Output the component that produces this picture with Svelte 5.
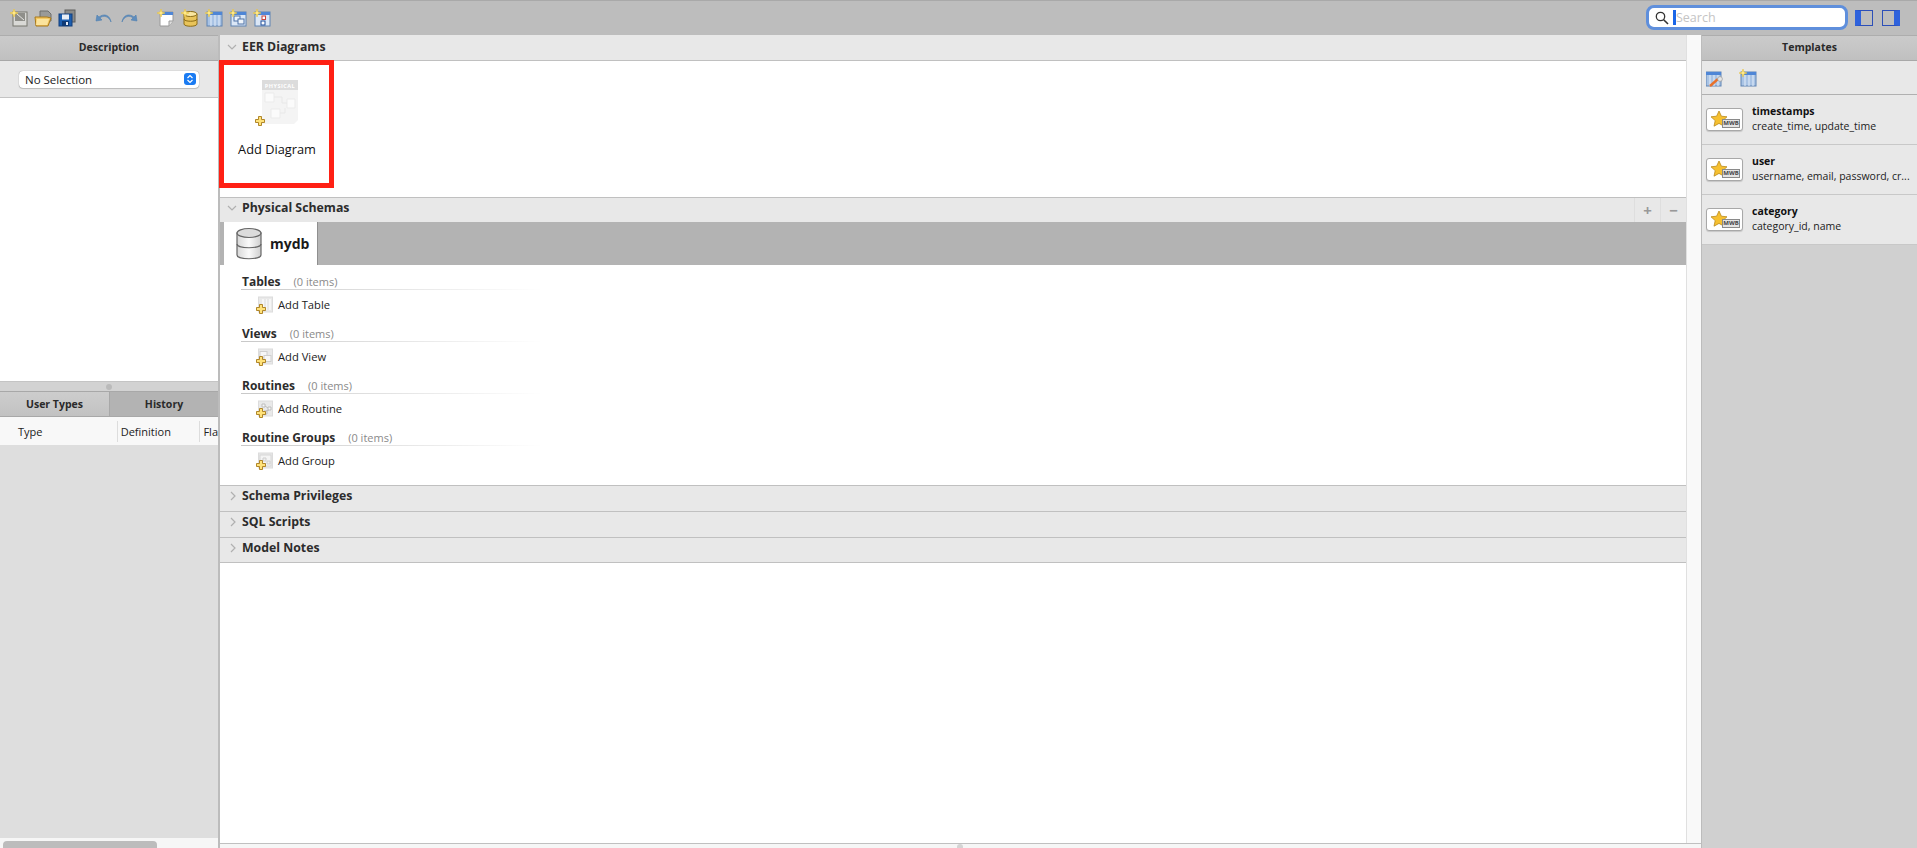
<script>
  const groups = [
    { title: 'Tables', add: 'Add Table', kind: 'table' },
    { title: 'Views', add: 'Add View', kind: 'view' },
    { title: 'Routines', add: 'Add Routine', kind: 'routine' },
    { title: 'Routine Groups', add: 'Add Group', kind: 'group' }
  ];
  const templates = [
    { name: 'timestamps', cols: 'create_time, update_time' },
    { name: 'user', cols: 'username, email, password, cr...' },
    { name: 'category', cols: 'category_id, name' }
  ];
  const closedSections = ['Schema Privileges', 'SQL Scripts', 'Model Notes'];
</script>

{#snippet spark(x, y)}
  <path d="M{x} {y - 4}l1 3 3 1-3 1-1 3-1-3-3-1 3-1z" fill="#ffe98a" stroke="#e8c23c" stroke-width=".6" />
{/snippet}

{#snippet plus(x, y)}
  <path d="M{x - 1.5} {y - 4.5}h3v3h3v3h-3v3h-3v-3h-3v-3h3z" fill="#ffe27a" stroke="#a87a1a" stroke-width=".9" />
{/snippet}

{#snippet chevron(open)}
  <svg class="chev" width="12" height="12" viewBox="0 0 12 12">
    {#if open}
      <path d="M2 4l4 4 4-4" fill="none" stroke="#b0b0b0" stroke-width="1.2" />
    {:else}
      <path d="M4 2l4 4-4 4" fill="none" stroke="#b0b0b0" stroke-width="1.2" />
    {/if}
  </svg>
{/snippet}

{#snippet addIcon(kind)}
  <svg width="18" height="18" viewBox="0 0 18 18">
    <rect x="2.5" y="1" width="14" height="15" fill="#e9e9e9" stroke="#dcdcdc" />
    {#if kind === 'table'}
      <path d="M6 3h9v11H6z" fill="#f6f6f6" /><path d="M9 3v11M12 3v11" stroke="#dadada" />
    {:else if kind === 'view'}
      <rect x="4" y="3.5" width="7" height="6" fill="#f7f7f7" stroke="#cfcfcf" />
      <rect x="8" y="7.5" width="7" height="6" fill="#f7f7f7" stroke="#cfcfcf" />
    {:else if kind === 'routine'}
      <path d="M6 4h3v3H6zM12 7h3v3h-3zM8 11h3v3H8z" fill="#f7f7f7" stroke="#bdbdbd" /><path d="M9 6l3 2M13 10l-3 1" stroke="#bdbdbd" />
    {:else}
      <rect x="4" y="3" width="11" height="11" fill="#f4f4f4" stroke="#d6d6d6" />
      <path d="M7 6h3v3H7zM11 9h3v3h-3z" fill="#efefef" stroke="#cfcfcf" />
    {/if}
    {@render plus(5, 13)}
  </svg>
{/snippet}

{#snippet tableTile(x)}
  <rect x={x} y="3" width="15" height="14" fill="#a9c3e4" stroke="#5f83b3" />
  <rect x={x} y="3" width="15" height="3" fill="#4f86d6" />
  <path d="M{x + 4} 6v11M{x + 8} 6v11M{x + 12} 6v11" stroke="#e4eefa" />
{/snippet}

<div class="app">
  <header class="toolbar">
    <div class="tools">
      <div class="tool-group">
        <svg width="18" height="18" viewBox="0 0 18 18">
          <rect x="3" y="3" width="14" height="14" fill="#d9d9d6" stroke="#77776f" />
          <rect x="5" y="4" width="10" height="8" fill="#8f8f8a" />
          <path d="M7 5l7 6" stroke="#e5e5e2" />
          {@render spark(4, 4)}
        </svg>
        <svg width="18" height="18" viewBox="0 0 18 18">
          <path d="M6 2h8l3 3v7H6z" fill="#9a9a98" stroke="#6e6e6c" />
          <path d="M1 8h12l4 1-3 8H2z" fill="#f5c862" stroke="#a8791a" />
          <path d="M3 10h12l-2 6H2z" fill="#fbe39c" />
        </svg>
        <svg width="18" height="18" viewBox="0 0 18 18">
          <rect x="7" y="1" width="10" height="12" fill="#8a8a88" stroke="#5e5e5c" />
          <rect x="1" y="5" width="13" height="12" fill="#1c5fb0" stroke="#123f7c" />
          <rect x="4" y="5.5" width="7" height="5" fill="#e9eef5" />
          <rect x="4" y="12" width="7" height="5" fill="#0f3a75" />
          <rect x="8" y="13" width="2" height="3" fill="#e9eef5" />
        </svg>
      </div>
      <div class="tool-group undo">
        <svg width="18" height="18" viewBox="0 0 18 18">
          <path d="M16 13C14 7 8 6 5 9l2 2-6 1 1-6 2 2c5-4 11-2 12 5z" fill="#5f8dbd" stroke="#4f7fb0" stroke-width=".6" />
        </svg>
        <svg width="18" height="18" viewBox="0 0 18 18">
          <path d="M2 13c2-6 8-7 11-4l-2 2 6 1-1-6-2 2c-5-4-11-2-12 5z" fill="#5f8dbd" stroke="#4f7fb0" stroke-width=".6" />
        </svg>
      </div>
      <div class="tool-group">
        <svg width="18" height="18" viewBox="0 0 18 18">
          <path d="M3 3h13v9l-4 5H3z" fill="#fff" stroke="#9a9a9a" />
          <rect x="3" y="3" width="13" height="3" fill="#4f86d6" />
          <path d="M12 17v-5h4" fill="#ddd" stroke="#9a9a9a" />
          {@render spark(4, 4)}
        </svg>
        <svg width="18" height="18" viewBox="0 0 18 18">
          <path d="M3 5v10c0 3 13 3 13 0V5z" fill="#e9c45a" stroke="#8c6c16" />
          <ellipse cx="9.5" cy="5" rx="6.5" ry="2.5" fill="#f9e6a0" stroke="#8c6c16" />
          <path d="M3 10c0 3 13 3 13 0" fill="none" stroke="#8c6c16" />
          {@render spark(4, 4)}
        </svg>
        <svg width="18" height="18" viewBox="0 0 18 18">
          {@render tableTile(2)}
          {@render spark(4, 4)}
        </svg>
        <svg width="18" height="18" viewBox="0 0 18 18">
          <rect x="2" y="3" width="15" height="14" fill="#dbe7f6" stroke="#5f83b3" />
          <rect x="2" y="3" width="15" height="3" fill="#4f86d6" />
          <rect x="5" y="7" width="6" height="5" fill="#eef4fb" stroke="#4f73a6" />
          <rect x="9" y="10" width="6" height="5" fill="#eef4fb" stroke="#4f73a6" />
          {@render spark(4, 4)}
        </svg>
        <svg width="18" height="18" viewBox="0 0 18 18">
          <rect x="2" y="3" width="15" height="14" fill="#dbe7f6" stroke="#5f83b3" />
          <rect x="2" y="3" width="15" height="3" fill="#4f86d6" />
          <rect x="9" y="7" width="3.5" height="3.5" fill="#fff" stroke="#c8443c" />
          <rect x="8" y="12" width="4" height="4" fill="#fff" stroke="#1f4f9c" />
          {@render spark(4, 4)}
        </svg>
      </div>
    </div>
    <div class="search">
      <svg width="14" height="14" viewBox="0 0 14 14">
        <circle cx="5.5" cy="5.5" r="4.2" fill="none" stroke="#333" stroke-width="1.3" />
        <path d="M8.7 8.7l4.3 4.3" stroke="#333" stroke-width="1.6" />
      </svg>
      <span class="caret"></span>
      <span class="placeholder">Search</span>
    </div>
    <div class="toggles">
      <span class="toggle left"></span>
      <span class="toggle right"></span>
    </div>
  </header>

  <div class="body">
    <aside class="side">
      <div class="panel-title">Description</div>
      <div class="selector">
        <div class="select">
          <span>No Selection</span>
          <span class="stepper">
            <svg width="8" height="10" viewBox="0 0 8 10">
              <path d="M1.5 4L4 1.5 6.5 4M1.5 6L4 8.5 6.5 6" fill="none" stroke="#fff" stroke-width="1.2" />
            </svg>
          </span>
        </div>
      </div>
      <div class="desc"></div>
      <div class="splitter"><span class="dot"></span></div>
      <div class="tabs">
        <div class="tab active">User Types</div>
        <div class="tab">History</div>
      </div>
      <div class="cols">
        <span class="col type">Type</span>
        <span class="col def">Definition</span>
        <span class="col flags">Fla</span>
      </div>
      <div class="types"></div>
      <div class="hscroll"><span class="thumb"></span></div>
    </aside>

    <main class="center">
      <div class="center-row">
        <div class="overview">
          <div class="section-head first">
            {@render chevron(true)}
            <span>EER Diagrams</span>
          </div>
          <div class="diagrams">
            <div class="tile">
              <svg width="46" height="48" viewBox="0 0 46 48">
                <path d="M8 1h36v40l-4 4H8z" fill="#f4f4f4" />
                <rect x="8" y="1" width="36" height="10" fill="#dcdcdc" />
                <text x="26" y="8.5" text-anchor="middle" class="phys">PHYSICAL</text>
                <path d="M11 14h9v9h-9zM33 20h8v9h-8zM17 30h9v9h-9z" fill="#fbfbfb" stroke="#ebebeb" />
                <path d="M20 18h8v6h5M26 34h5v-5" fill="none" stroke="#e8e8e8" />
                {@render plus(6, 42)}
              </svg>
              <span>Add Diagram</span>
            </div>
          </div>
          <div class="section-head schemas">
            {@render chevron(true)}
            <span>Physical Schemas</span>
            <span class="head-actions">
              <span class="action">+</span>
              <span class="action">−</span>
            </span>
          </div>
          <div class="schema-strip">
            <div class="schema-tab">
              <svg width="28" height="34" viewBox="0 0 28 34">
                <defs>
                  <linearGradient id="dbfill" x1="0" x2="1" y1="0" y2="0">
                    <stop offset="0" stop-color="#d8d8d8" />
                    <stop offset=".5" stop-color="#fafafa" />
                    <stop offset="1" stop-color="#cfcfcf" />
                  </linearGradient>
                </defs>
                <path d="M2 6v22c0 5 24 5 24 0V6z" fill="url(#dbfill)" stroke="#666" stroke-width="1.2" />
                <ellipse cx="14" cy="6" rx="12" ry="4.5" fill="#dcdcdc" stroke="#666" stroke-width="1.2" />
                <path d="M2 17c0 5 24 5 24 0" fill="none" stroke="#666" stroke-width="1.2" />
              </svg>
              <span>mydb</span>
            </div>
          </div>
          <div class="schema-body">
            {#each groups as g}
              <div class="group">
                <div class="group-title"><b>{g.title}</b><span>(0 items)</span></div>
                <div class="add-row">
                  {@render addIcon(g.kind)}
                  <span>{g.add}</span>
                </div>
              </div>
            {/each}
          </div>
          {#each closedSections as title}
            <div class="section-head closed">
              {@render chevron(false)}
              <span>{title}</span>
            </div>
          {/each}
          <div class="rest"></div>
        </div>
        <div class="vscroll"></div>
      </div>
      <div class="status"><span class="status-dot"></span></div>
    </main>

    <aside class="templates">
      <div class="panel-title">Templates</div>
      <div class="template-tools">
        <svg width="18" height="18" viewBox="0 0 18 18">
          {@render tableTile(0)}
          <path d="M4 17l8-7" stroke="#e8702a" stroke-width="2.4" />
          <circle cx="14" cy="10" r="2.4" fill="#e6e6e6" stroke="#999" stroke-width=".7" />
        </svg>
        <svg width="18" height="18" viewBox="0 0 18 18">
          {@render tableTile(2)}
          {@render spark(4, 4)}
        </svg>
      </div>
      {#each templates as t}
        <div class="template">
          <div class="badge">
            <svg width="18" height="18" viewBox="0 0 18 18">
              <path d="M9 1l2.4 5.2 5.6.6-4.2 3.8 1.2 5.6L9 13.4l-5 2.8 1.2-5.6L1 6.8l5.6-.6z" fill="#f6c02f" stroke="#b98a1e" stroke-width=".8" />
            </svg>
            <span class="mwb">MWB</span>
          </div>
          <div class="template-text">
            <b>{t.name}</b>
            <span>{t.cols}</span>
          </div>
        </div>
      {/each}
    </aside>
  </div>
</div>

<style>
  :global(body) {
    margin: 0;
    overflow: hidden;
  }

  .app {
    width: 1917px;
    height: 848px;
    display: flex;
    flex-direction: column;
    font-family: "Open Sans", "Noto Sans", sans-serif;
    font-size: 11px;
    color: #222;
    background: #fff;
  }

  .toolbar {
    height: 35px;
    flex: none;
    box-sizing: border-box;
    border-top: 1px solid #a9a9a9;
    background: #bdbdbd;
    display: flex;
    align-items: center;
    padding: 0 17px 0 10px;
  }

  .tools {
    flex: 1;
    display: flex;
    gap: 19px;
  }

  .tool-group {
    display: flex;
    gap: 6px;
  }

  .undo {
    gap: 7px;
  }

  .search {
    width: 202px;
    height: 25px;
    box-sizing: border-box;
    margin-bottom: 1px;
    border: 3px solid #5f8fdc;
    border-radius: 8px;
    background: #fff;
    display: flex;
    align-items: center;
    padding-left: 6px;
    font-size: 12.5px;
    color: #c4c4c4;
  }

  .caret {
    width: 3px;
    height: 15px;
    margin-left: 4px;
    background: #1a66e8;
  }

  .toggles {
    display: flex;
    gap: 9px;
    margin-left: 7px;
  }

  .toggle {
    width: 18px;
    height: 16px;
    box-sizing: border-box;
    border: 1px solid #2c4fb8;
  }

  .toggle.left {
    border-left: 6px solid #2f62dc;
  }

  .toggle.right {
    border-right: 6px solid #2f62dc;
  }

  .body {
    flex: 1;
    min-height: 0;
    display: flex;
  }

  .panel-title {
    height: 26px;
    flex: none;
    box-sizing: border-box;
    display: flex;
    align-items: center;
    justify-content: center;
    padding-bottom: 2px;
    border-top: 1px solid #adadad;
    border-bottom: 1px solid #a8a8a8;
    background: linear-gradient(#cbcbcb, #c0c0c0);
    font-weight: 700;
    font-size: 10.5px;
    color: #2a2a2a;
  }

  .side {
    width: 218px;
    flex: none;
    display: flex;
    flex-direction: column;
    border-right: 2px solid #bcbcbc;
  }

  .selector {
    height: 37px;
    flex: none;
    box-sizing: border-box;
    padding: 10px 19px 0;
    background: #e8e8e8;
    border-bottom: 1px solid #c4c4c4;
  }

  .select {
    height: 17px;
    width: 180px;
    box-sizing: border-box;
    border-radius: 4px;
    background: #fff;
    box-shadow: 0 0 1px rgba(0, 0, 0, 0.5), 0 1px 1px rgba(0, 0, 0, 0.15);
    display: flex;
    align-items: center;
    justify-content: space-between;
    padding: 0 3px 1px 6px;
    font-size: 11.5px;
  }

  .stepper {
    width: 12px;
    height: 12px;
    border-radius: 3px;
    background: #1a7bf2;
    display: flex;
    align-items: center;
    justify-content: center;
  }

  .desc {
    height: 283px;
    flex: none;
    background: #fff;
    border-bottom: 1px solid #c4c4c4;
  }

  .splitter {
    height: 9px;
    flex: none;
    background: #d2d2d2;
    display: flex;
    justify-content: center;
    align-items: center;
  }

  .dot {
    width: 6px;
    height: 6px;
    border-radius: 50%;
    background: #bababa;
  }

  .tabs {
    height: 26px;
    flex: none;
    display: flex;
    box-sizing: border-box;
    border-top: 1px solid #a8a8a8;
    border-bottom: 1px solid #a8a8a8;
  }

  .tab {
    flex: 1;
    display: flex;
    align-items: center;
    justify-content: center;
    padding-bottom: 1px;
    background: #b3b3b3;
    font-weight: 700;
    font-size: 10.5px;
    color: #2a2a2a;
  }

  .tab.active {
    flex: none;
    width: 109px;
    background: linear-gradient(#cdcdcd, #c2c2c2);
    border-right: 1px solid #a8a8a8;
  }

  .cols {
    height: 28px;
    flex: none;
    display: flex;
    align-items: center;
    background: #f8f8f8;
    overflow: hidden;
    font-size: 11px;
  }

  .col {
    box-sizing: border-box;
    height: 21px;
    line-height: 21px;
    padding-left: 3px;
  }

  .col.type {
    width: 118px;
    padding-left: 18px;
    border-right: 1px solid #ddd;
  }

  .col.def {
    width: 83px;
    border-right: 1px solid #ddd;
  }

  .types {
    flex: 1;
    background: #dedede;
  }

  .hscroll {
    height: 10px;
    flex: none;
    background: #f6f6f6;
    padding: 3px 0 0 3px;
    box-sizing: border-box;
  }

  .thumb {
    display: block;
    width: 154px;
    height: 7px;
    border-radius: 4px 4px 0 0;
    background: #bcbcbc;
  }

  .center {
    width: 1481px;
    flex: none;
    display: flex;
    flex-direction: column;
  }

  .center-row {
    flex: 1;
    min-height: 0;
    display: flex;
  }

  .overview {
    flex: 1;
    display: flex;
    flex-direction: column;
  }

  .vscroll {
    width: 14px;
    background: #f9f9f9;
    border-left: 1px solid #e0e0e0;
  }

  .status {
    height: 4px;
    background: #f6f6f6;
    border-top: 1px solid #c0c0c0;
    padding-left: 737px;
    overflow: hidden;
  }

  .status-dot {
    display: block;
    width: 6px;
    height: 6px;
    border-radius: 50%;
    background: #d4d4d4;
  }

  .section-head {
    height: 26px;
    flex: none;
    box-sizing: border-box;
    display: flex;
    align-items: center;
    background: #e8e8e8;
    border-top: 1px solid #c0c0c0;
    padding: 0 0 5px 6px;
    font-weight: 700;
    font-size: 12.3px;
    color: #2c2c2c;
  }

  .section-head.first {
    border-top: none;
    border-bottom: 1px solid #c0c0c0;
    padding-bottom: 2px;
  }

  .section-head.schemas {
    height: 25px;
  }

  .section-head.closed {
    padding-bottom: 6px;
  }

  .section-head.closed .chev {
    margin-left: 1px;
    margin-right: 3px;
  }

  .chev {
    margin-right: 4px;
  }

  .head-actions {
    margin-left: auto;
    display: flex;
    height: calc(100% + 5px);
    margin-bottom: -5px;
  }

  .action {
    width: 26px;
    box-sizing: border-box;
    border-left: 1px solid #dedede;
    display: flex;
    align-items: center;
    justify-content: center;
    font-size: 15px;
    font-weight: 700;
    color: #999;
  }

  .diagrams {
    height: 136px;
    flex: none;
    background: #fff;
  }

  .tile {
    position: relative;
    z-index: 1;
    width: 115px;
    height: 128px;
    box-sizing: border-box;
    margin: -1px 0 0 -1px;
    border: 5px solid #ff2014;
    display: flex;
    flex-direction: column;
    align-items: center;
    padding-top: 14px;
    font-size: 12.8px;
    color: #111;
  }

  .tile span {
    margin-top: 13px;
    margin-left: 1px;
  }

  .phys {
    font-size: 5.5px;
    font-weight: 700;
    fill: #fff;
    letter-spacing: 0.5px;
  }

  .schema-strip {
    height: 43px;
    flex: none;
    background: #b3b3b3;
    padding-left: 4px;
    box-sizing: border-box;
  }

  .schema-tab {
    width: 94px;
    height: 100%;
    box-sizing: border-box;
    background: #fff;
    border-right: 1px solid #8f8f8f;
    display: flex;
    align-items: center;
    padding-left: 11px;
    gap: 7px;
    font-weight: 700;
    font-size: 14px;
    color: #1a1a1a;
  }

  .schema-body {
    height: 220px;
    flex: none;
    padding: 8px 0 0 21px;
    box-sizing: border-box;
    background: #fff;
  }

  .group {
    height: 52px;
  }

  .group-title {
    width: 300px;
    height: 17px;
    box-sizing: border-box;
    padding-left: 1px;
    display: flex;
    align-items: center;
    gap: 13px;
    border-bottom: 1px solid;
    border-image: linear-gradient(90deg, #c8c8c8, #fff) 1;
  }

  .group-title b {
    font-size: 12px;
    color: #2c2c2c;
  }

  .group-title span {
    color: #8a8a8a;
    font-size: 11px;
  }

  .add-row {
    display: flex;
    align-items: center;
    gap: 4px;
    height: 29px;
    padding-left: 15px;
    font-size: 11.2px;
    color: #222;
  }

  .rest {
    flex: 1;
    margin-top: -1px;
    background: #fff;
    border-top: 1px solid #c0c0c0;
  }

  .templates {
    flex: 1;
    display: flex;
    flex-direction: column;
    background: #d0d0d0;
    border-left: 1px solid #bcbcbc;
  }

  .template-tools {
    height: 34px;
    flex: none;
    box-sizing: border-box;
    background: #e8e8e8;
    border-bottom: 1px solid #b0b0b0;
    display: flex;
    align-items: center;
    padding-left: 4px;
    gap: 15px;
  }

  .template {
    height: 50px;
    flex: none;
    box-sizing: border-box;
    background: #e8e8e8;
    border-bottom: 1px solid #c8c8c8;
    display: flex;
    align-items: center;
    padding-left: 4px;
    gap: 9px;
  }

  .badge {
    position: relative;
    width: 37px;
    height: 23px;
    box-sizing: border-box;
    background: #fff;
    border: 1px solid #a8a8a8;
    border-radius: 3px;
    box-shadow: 0 1px 1px rgba(0, 0, 0, 0.15);
    margin-top: -1px;
    padding: 1px 0 0 3px;
  }

  .mwb {
    position: absolute;
    right: 2px;
    bottom: 2px;
    height: 9px;
    width: 18px;
    background: #e4e4e4;
    border: 1px solid #8a8a8a;
    box-sizing: border-box;
    font-size: 6px;
    line-height: 7px;
    font-weight: 700;
    text-align: center;
    color: #444;
  }

  .template-text {
    display: flex;
    flex-direction: column;
    gap: 1px;
    margin-top: -3px;
    line-height: 14px;
    font-size: 10.5px;
    white-space: nowrap;
  }

  .template-text b {
    color: #111;
  }
</style>
